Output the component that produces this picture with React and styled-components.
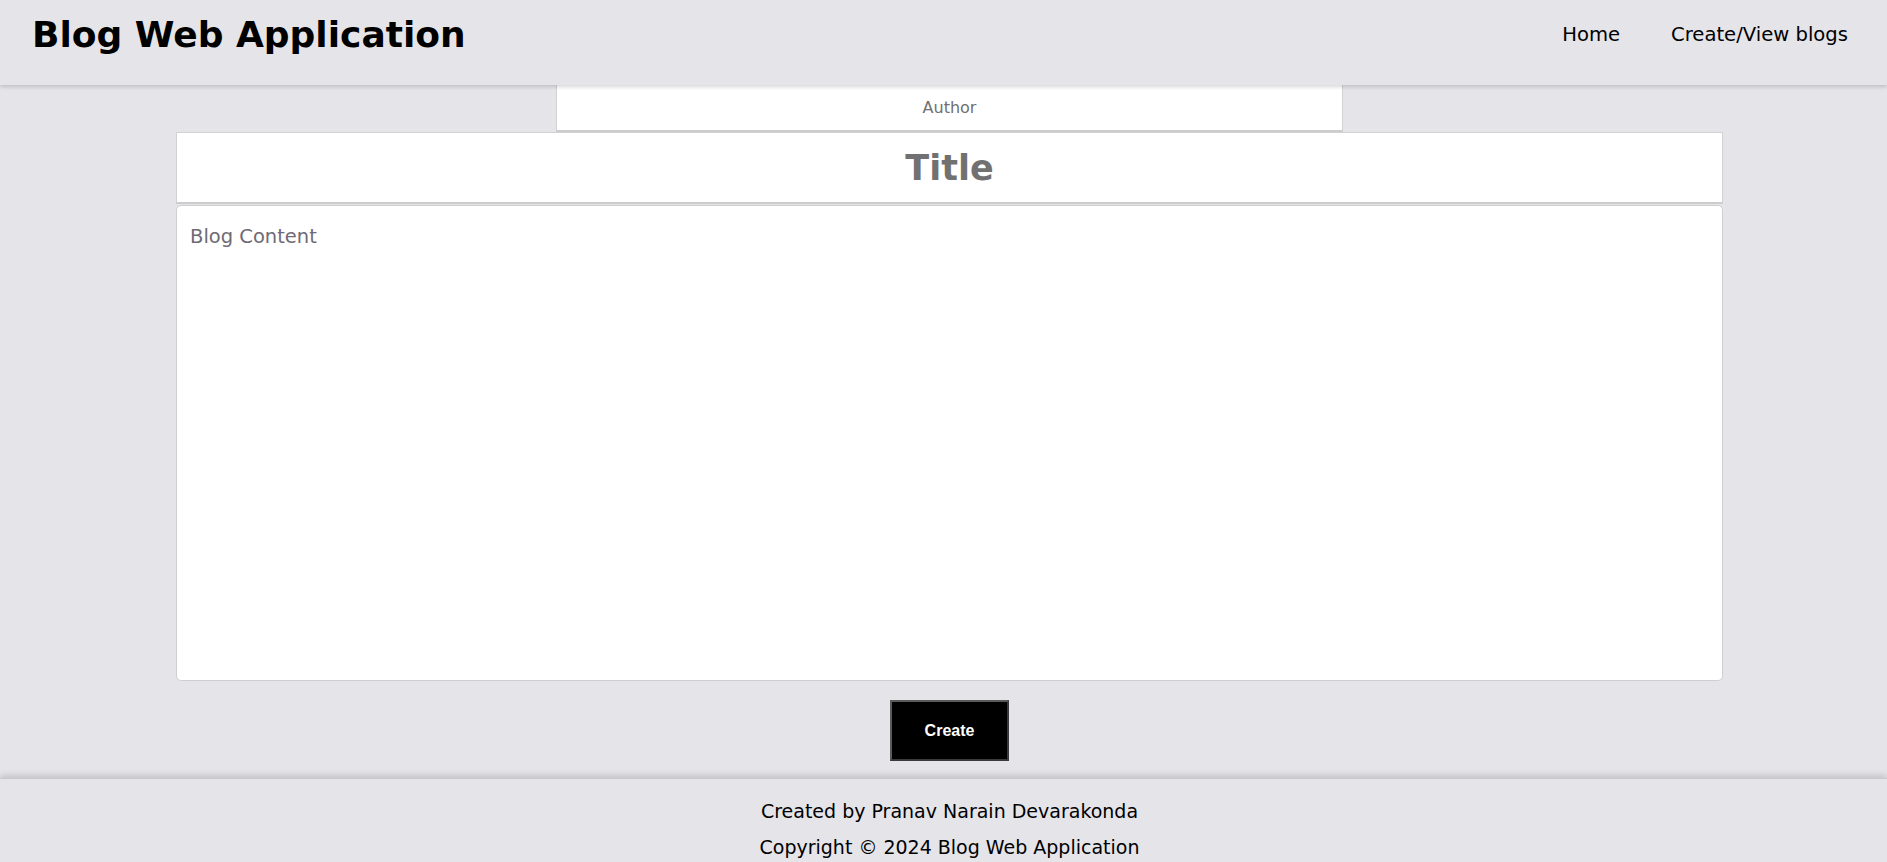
import React from "react";
import styled, { createGlobalStyle } from "styled-components";

const Global = createGlobalStyle`
  html, body {
    margin: 0;
    padding: 0;
    overflow: hidden;
    background: #e5e4e9;
    font-family: "DejaVu Sans", Verdana, sans-serif;
  }
  * { box-sizing: border-box; }
`;

const Page = styled.div`
  display: flex;
  flex-direction: column;
  height: 862px;
  background: #e5e4e9;
`;

const Header = styled.header`
  position: relative;
  z-index: 2;
  height: 85px;
  flex: 0 0 85px;
  display: flex;
  align-items: center;
  justify-content: space-between;
  padding: 0 39px 17px 32px;
  background: #e5e4e9;
  box-shadow: 0 2px 4px rgba(0, 0, 0, 0.16);
`;

const Brand = styled.h1`
  margin: 0;
  font-size: 36px;
  font-weight: bold;
  color: #000;
`;

const Nav = styled.nav`
  display: flex;
  gap: 51px;
`;

const NavLink = styled.a`
  font-size: 19.6px;
  color: #000;
  text-decoration: none;
`;

const Main = styled.main`
  flex: 1;
  display: flex;
  flex-direction: column;
  align-items: center;
  padding-left: 12px;
`;

const AuthorInput = styled.input`
  width: 787px;
  height: 47px;
  border: 1px solid #d2d2d2;
  border-bottom: 2px solid #cccccc;
  border-top: none;
  background: #fff;
  text-align: center;
  font-family: "DejaVu Sans", Verdana, sans-serif;
  font-size: 16px;
  outline: none;
  &::placeholder { color: #707070; }
`;

const TitleInput = styled.input`
  width: 1547px;
  height: 72px;
  border: 1px solid #d2d2d2;
  border-bottom: 2px solid #cccccc;
  background: #fff;
  text-align: center;
  font-family: "DejaVu Sans", Verdana, sans-serif;
  font-size: 35px;
  font-weight: bold;
  outline: none;
  &::placeholder { color: #717171; }
`;

const ContentArea = styled.textarea`
  margin-top: 1px;
  width: 1547px;
  height: 476px;
  border: 1px solid #cfcfcf;
  border-radius: 5px;
  background: #fff;
  padding: 19px 13px;
  resize: none;
  font-family: "DejaVu Sans", Verdana, sans-serif;
  font-size: 19.5px;
  outline: none;
  &::placeholder { color: #6f6a75; }
`;

const CreateButton = styled.button`
  margin-top: 19px;
  width: 119px;
  height: 61px;
  background: #000;
  color: #fff;
  border: 2px solid #5a5a5a;
  border-right-color: #3a3a3a;
  border-bottom-color: #3a3a3a;
  font-family: "Liberation Sans", Arial, sans-serif;
  font-size: 16px;
  font-weight: bold;
  cursor: pointer;
`;

const Footer = styled.footer`
  position: relative;
  flex: 0 0 84px;
  height: 84px;
  overflow: hidden;
  padding-top: 14px;
  padding-left: 12px;
  text-align: center;
  background: #e5e4e9;
  border-top: 1px solid #cac9ce;
  box-shadow: 0 -3px 6px rgba(0, 0, 0, 0.14);
`;

const FooterLine = styled.p`
  margin: 0;
  line-height: 36px;
  font-size: 19px;
  color: #000;
`;

export default function App() {
  return (
    <Page>
      <Global />
      <Header>
        <Brand>Blog Web Application</Brand>
        <Nav>
          <NavLink href="#">Home</NavLink>
          <NavLink href="#">Create/View blogs</NavLink>
        </Nav>
      </Header>
      <Main>
        <AuthorInput placeholder="Author" />
        <TitleInput placeholder="Title" />
        <ContentArea placeholder="Blog Content" />
        <CreateButton>Create</CreateButton>
      </Main>
      <Footer>
        <FooterLine>Created by Pranav Narain Devarakonda</FooterLine>
        <FooterLine>Copyright © 2024 Blog Web Application</FooterLine>
      </Footer>
    </Page>
  );
}
